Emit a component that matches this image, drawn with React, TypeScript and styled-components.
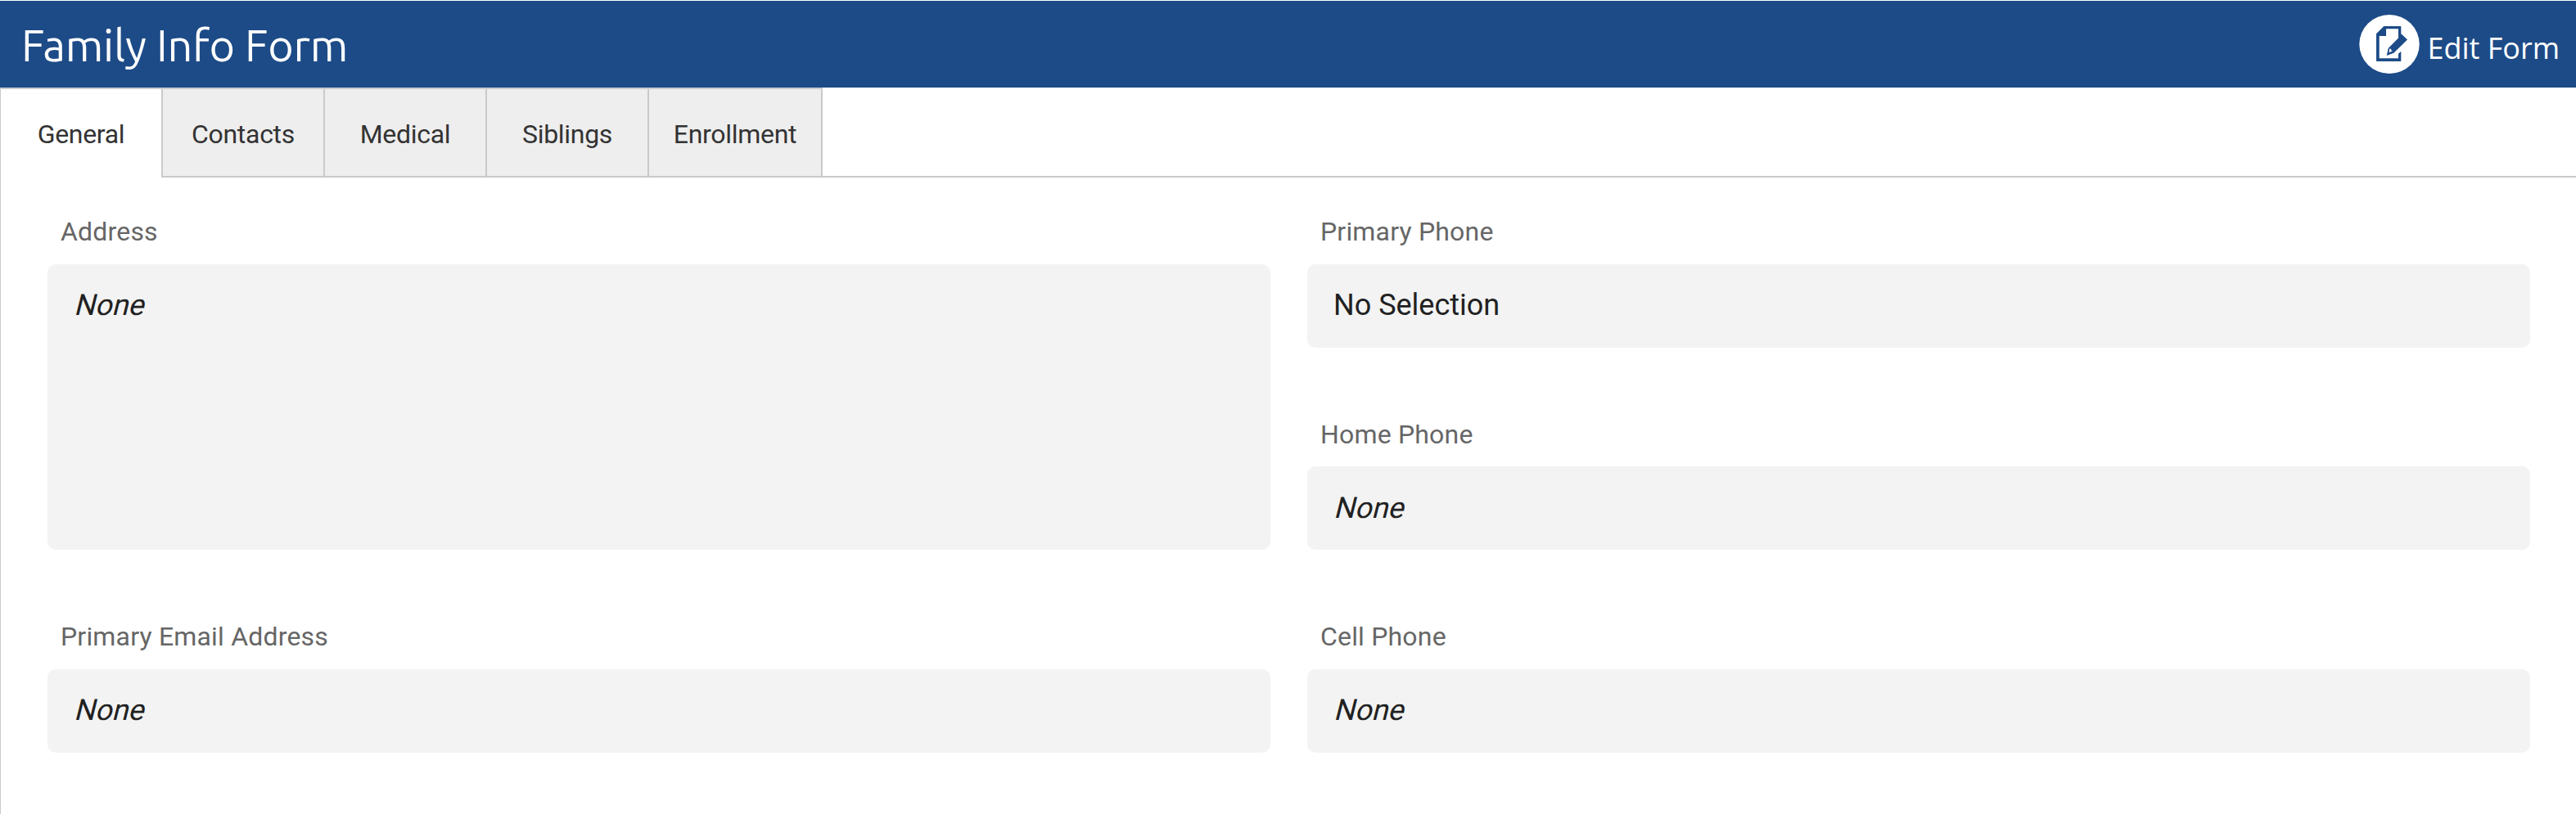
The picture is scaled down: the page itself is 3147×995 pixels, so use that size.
import React from "react";
import styled, { createGlobalStyle } from "styled-components";

const GlobalStyle = createGlobalStyle`
  *, *::before, *::after { box-sizing: border-box; }
  body { margin: 0; background: #fff; font-family: Roboto, sans-serif; color: #333; }
`;

const Page = styled.div`
  min-height: 995px;
  padding-top: 1px;
  display: flex;
  flex-direction: column;
`;

const Header = styled.header`
  height: 106px;
  padding: 0 20px 0 26px;
  display: flex;
  justify-content: space-between;
  background: #1d4b87;
  color: #fff;
`;

const Title = styled.h1`
  margin: 0;
  font: 400 54px/108px Ubuntu, "Noto Sans", sans-serif;
  letter-spacing: -0.2px;
  white-space: nowrap;
`;

const EditButton = styled.button`
  display: flex;
  align-items: flex-start;
  gap: 9px;
  padding: 17px 0 0;
  border: 0;
  background: none;
  color: inherit;
  font: 400 36px/82px "Open Sans", sans-serif;
  white-space: nowrap;
`;

const EditIcon = styled.svg`
  display: block;
  width: 74px;
  height: 72px;
`;

const Panel = styled.main`
  flex: 1;
  border-left: 1px solid #cacaca;
`;

const TabBar = styled.nav`
  height: 110px;
  display: flex;
`;

const Tab = styled.div<{ $active?: boolean; $width: number }>`
  width: ${(p) => p.$width}px;
  display: flex;
  justify-content: center;
  border: solid #cacaca;
  border-width: 2px 2px ${(p) => (p.$active ? 0 : 2)}px 0;
  background: ${(p) => (p.$active ? "#fff" : "#eee")};
  font-size: 32px;
  line-height: 111px;
  letter-spacing: -0.3px;
`;

const TabFiller = styled.div`
  flex: 1;
  border-bottom: 2px solid #cacaca;
`;

const Fields = styled.div`
  display: grid;
  grid-template-columns: 1494px 1494px;
  grid-template-rows: repeat(3, 247.4px);
  column-gap: 45px;
  padding: 41px 0 0 57px;
`;

const Field = styled.div<{ $rows?: number }>`
  grid-row: span ${(p) => p.$rows ?? 1};
  display: flex;
  flex-direction: column;
  padding-bottom: 80.4px;
`;

const Label = styled.div`
  height: 65px;
  padding: 0.2px 0 0 16px;
  font-size: 32px;
  line-height: 50px;
  letter-spacing: 0.18px;
  color: #666;
`;

const Value = styled.div`
  flex: 1;
  padding: 0.2px 0 0 32px;
  border-radius: 10px;
  background: #f3f3f3;
  color: #212121;
  font-size: 36px;
  line-height: 101px;
`;

/* Slants the upright face around its baseline. */
const EmptyValue = styled.span`
  display: inline-block;
  transform: skewX(-14deg);
  transform-origin: 0 62px;
`;

const tabs = [
  { name: "General", width: 198 },
  { name: "Contacts", width: 198 },
  { name: "Medical", width: 198 },
  { name: "Siblings", width: 198 },
  { name: "Enrollment", width: 212 },
];

const fields: { label: string; value?: string; rows?: number }[] = [
  { label: "Address", rows: 2 },
  { label: "Primary Phone", value: "No Selection" },
  { label: "Home Phone" },
  { label: "Primary Email Address" },
  { label: "Cell Phone" },
];

export default function App() {
  return (
    <>
      <GlobalStyle />
      <Page>
        <Header>
          <Title>Family Info Form</Title>
          <EditButton>
            <EditIcon viewBox="0 0 74 72">
              <ellipse cx="37" cy="36" rx="36.7" ry="36" fill="#fff" />
              <path
                fill="#1d4b87"
                fillRule="evenodd"
                d="M30.3 14H50.8Q51.3 14 51.3 14.5V23.8L52 23.7 59 30.5 42.3 46.7 33.7 50 35.7 41 48 28.5V17.3H33V26H24.7V53.3H48V47.7L51.3 44.7V56.3Q51.3 57 50.6 57H21.7Q21 57 21 56.3V23.3ZM37.3 41.3 36.5 46.2 41 44.3 39.5 43.8 39 42Z"
              />
            </EditIcon>
            Edit Form
          </EditButton>
        </Header>
        <Panel>
          <TabBar>
            {tabs.map((t, i) => (
              <Tab key={t.name} $width={t.width} $active={i === 0}>
                {t.name}
              </Tab>
            ))}
            <TabFiller />
          </TabBar>
          <Fields>
            {fields.map((f) => (
              <Field key={f.label} $rows={f.rows}>
                <Label>{f.label}</Label>
                <Value>{f.value ?? <EmptyValue>None</EmptyValue>}</Value>
              </Field>
            ))}
          </Fields>
        </Panel>
      </Page>
    </>
  );
}
